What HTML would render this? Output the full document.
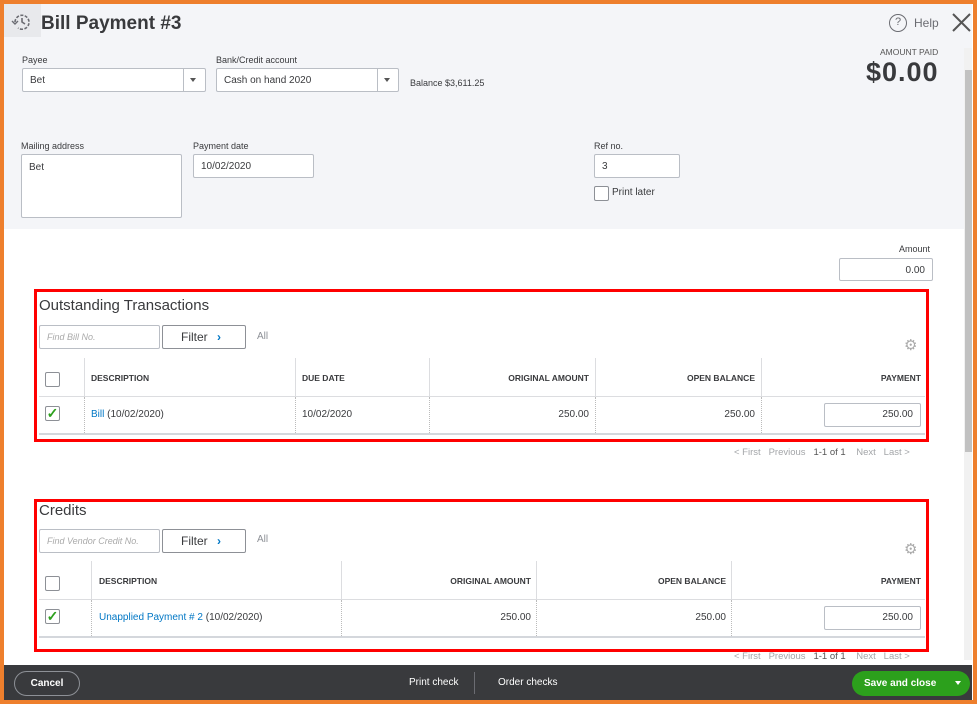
<!DOCTYPE html>
<html><head><meta charset="utf-8"><style>
*{box-sizing:border-box;margin:0;padding:0}
body{width:978px;height:706px;position:relative;overflow:hidden;background:#fff;font-family:"Liberation Sans",sans-serif;color:#393a3d}
.a{position:absolute}
.frame{left:0;top:0;width:977px;height:704px;border:4px solid #ee7f2d;border-top-width:4px}
.lbl{font-size:9px;color:#393a3d}
.inp{background:#fff;border:1px solid #babec5;border-radius:2px;font-size:10px;color:#393a3d;padding-left:7px}
.red{border:3px solid #f00}
.th{font-size:8.5px;font-weight:bold;color:#393a3d}
.td{font-size:10px;color:#393a3d}
.link{color:#0077c5}
.vl{width:1px;background:#dcdde0}
.vd{width:0;border-left:1px dotted #bbb}
.cb{width:15px;height:15px;border:1px solid #8d9096;border-radius:2px;background:#fff}
.pg{font-size:9.5px;color:#a3a5a8}
</style></head><body>
<div class="a" style="left:4px;top:4px;width:968px;height:225px;background:#f4f5f8"></div>
<div class="a" style="left:4px;top:229px;width:960px;height:436px;background:#fff"></div>
<div class="a" style="left:4px;top:4px;width:37px;height:33px;background:#e8e9ec"></div>
<svg class="a" style="left:11px;top:12px" width="22" height="20" viewBox="0 0 22 20"><path d="M4 10a7 7 0 1 1 3 6" fill="none" stroke="#6b6c72" stroke-width="1.6" stroke-dasharray="3 1.5"/><path d="M11 6v4l3 2" fill="none" stroke="#6b6c72" stroke-width="1.6"/><path d="M1 9l3 3 3-3" fill="none" stroke="#6b6c72" stroke-width="1.4"/></svg>
<div class="a" style="left:41px;top:13px;font-size:19px;font-weight:bold;color:#393a3d">Bill Payment #3</div>
<div class="a" style="left:889px;top:14px;width:18px;height:18px;border:1.5px solid #6b6c72;border-radius:50%;font-size:11px;text-align:center;line-height:15px;color:#6b6c72">?</div>
<div class="a" style="left:914px;top:16px;font-size:12px;color:#6b6c72">Help</div>
<svg class="a" style="left:951px;top:12px" width="21" height="21"><path d="M2 2L19 19M19 2L2 19" stroke="#555" stroke-width="2"/></svg>
<div class="a" style="left:880px;top:47px;font-size:8.5px;color:#555">AMOUNT PAID</div>
<div class="a" style="left:866px;top:57px;font-size:27px;font-weight:bold;color:#393a3d;letter-spacing:1px">$0.00</div>

<div class="a lbl" style="left:22px;top:55px">Payee</div>
<div class="a inp" style="left:22px;top:68px;width:184px;height:24px;line-height:24px">Bet</div>
<div class="a" style="left:183px;top:69px;width:1px;height:22px;background:#babec5"></div>
<div class="a" style="left:190px;top:78px;border:3.5px solid transparent;border-top:4px solid #555"></div>
<div class="a lbl" style="left:216px;top:55px">Bank/Credit account</div>
<div class="a inp" style="left:216px;top:68px;width:183px;height:24px;line-height:24px">Cash on hand 2020</div>
<div class="a" style="left:377px;top:69px;width:1px;height:22px;background:#babec5"></div>
<div class="a" style="left:384px;top:78px;border:3.5px solid transparent;border-top:4px solid #555"></div>
<div class="a" style="left:410px;top:78px;font-size:9px;color:#393a3d">Balance $3,611.25</div>

<div class="a lbl" style="left:21px;top:141px">Mailing address</div>
<div class="a inp" style="left:21px;top:154px;width:161px;height:64px;padding-top:7px">Bet</div>
<div class="a lbl" style="left:193px;top:141px">Payment date</div>
<div class="a inp" style="left:193px;top:154px;width:121px;height:24px;line-height:24px">10/02/2020</div>
<div class="a lbl" style="left:594px;top:141px">Ref no.</div>
<div class="a inp" style="left:594px;top:154px;width:86px;height:24px;line-height:24px">3</div>
<div class="a cb" style="left:594px;top:186px"></div>
<div class="a" style="left:612px;top:187px;font-size:10px">Print later</div>

<div class="a lbl" style="left:899px;top:244px">Amount</div>
<div class="a inp" style="left:839px;top:258px;width:94px;height:23px;line-height:23px;text-align:right;padding-right:7px">0.00</div>

<!-- Outstanding -->
<div class="a red" style="left:34px;top:289px;width:895px;height:153px"></div>
<div class="a" style="left:39px;top:297px;font-size:15px;color:#393a3d">Outstanding Transactions</div>
<div class="a inp" style="left:39px;top:325px;width:121px;height:24px;line-height:22px;font-size:9px;font-style:italic;color:#aaa">Find Bill No.</div>
<div class="a" style="left:162px;top:325px;width:84px;height:24px;border:1px solid #8d9096;border-radius:2px;font-size:12px;line-height:22px;padding-left:18px;color:#393a3d">Filter <span style="color:#0077c5;font-weight:bold;margin-left:6px">›</span></div>
<div class="a" style="left:257px;top:331px;font-size:10px;color:#8d9096">All</div>
<div class="a" style="left:904px;top:336px;font-size:15px;color:#aaa">⚙</div>
<div class="a vl" style="left:84px;top:358px;height:38px"></div>
<div class="a vl" style="left:295px;top:358px;height:38px"></div>
<div class="a vl" style="left:429px;top:358px;height:38px"></div>
<div class="a vl" style="left:595px;top:358px;height:38px"></div>
<div class="a vl" style="left:761px;top:358px;height:38px"></div>
<div class="a" style="left:39px;top:396px;width:886px;height:1px;background:#dcdde0"></div>
<div class="a vd" style="left:84px;top:397px;height:36px"></div>
<div class="a vd" style="left:295px;top:397px;height:36px"></div>
<div class="a vd" style="left:429px;top:397px;height:36px"></div>
<div class="a vd" style="left:595px;top:397px;height:36px"></div>
<div class="a vd" style="left:761px;top:397px;height:36px"></div>
<div class="a" style="left:39px;top:433px;width:886px;height:2px;background:#d4d7dc"></div>
<div class="a cb" style="left:45px;top:372px"></div>
<div class="a th" style="left:91px;top:373px">DESCRIPTION</div>
<div class="a th" style="left:302px;top:373px">DUE DATE</div>
<div class="a th" style="left:430px;top:373px;width:159px;text-align:right">ORIGINAL AMOUNT</div>
<div class="a th" style="left:596px;top:373px;width:159px;text-align:right">OPEN BALANCE</div>
<div class="a th" style="left:762px;top:373px;width:159px;text-align:right">PAYMENT</div>
<div class="a cb" style="left:45px;top:406px;color:#2ca01c;font-size:14px;line-height:12px;text-align:center;font-weight:bold">✓</div>
<div class="a td" style="left:91px;top:409px"><span class="link">Bill</span> (10/02/2020)</div>
<div class="a td" style="left:302px;top:409px">10/02/2020</div>
<div class="a td" style="left:430px;top:409px;width:159px;text-align:right">250.00</div>
<div class="a td" style="left:596px;top:409px;width:159px;text-align:right">250.00</div>
<div class="a inp" style="left:824px;top:403px;width:97px;height:24px;line-height:22px;text-align:right;padding-right:7px">250.00</div>
<div class="a pg" style="left:734px;top:447px">&lt; First&nbsp;&nbsp;&nbsp;Previous&nbsp;&nbsp;&nbsp;<span style="color:#555">1-1 of 1</span>&nbsp;&nbsp;&nbsp;&nbsp;Next&nbsp;&nbsp;&nbsp;Last &gt;</div>

<!-- Credits -->
<div class="a red" style="left:34px;top:499px;width:895px;height:153px"></div>
<div class="a" style="left:39px;top:502px;font-size:15px;color:#393a3d">Credits</div>
<div class="a inp" style="left:39px;top:529px;width:121px;height:24px;line-height:22px;font-size:9px;font-style:italic;color:#aaa">Find Vendor Credit No.</div>
<div class="a" style="left:162px;top:529px;width:84px;height:24px;border:1px solid #8d9096;border-radius:2px;font-size:12px;line-height:22px;padding-left:18px;color:#393a3d">Filter <span style="color:#0077c5;font-weight:bold;margin-left:6px">›</span></div>
<div class="a" style="left:257px;top:534px;font-size:10px;color:#8d9096">All</div>
<div class="a" style="left:904px;top:540px;font-size:15px;color:#aaa">⚙</div>
<div class="a vl" style="left:91px;top:561px;height:38px"></div>
<div class="a vl" style="left:341px;top:561px;height:38px"></div>
<div class="a vl" style="left:536px;top:561px;height:38px"></div>
<div class="a vl" style="left:731px;top:561px;height:38px"></div>
<div class="a" style="left:39px;top:599px;width:886px;height:1px;background:#dcdde0"></div>
<div class="a vd" style="left:91px;top:600px;height:36px"></div>
<div class="a vd" style="left:341px;top:600px;height:36px"></div>
<div class="a vd" style="left:536px;top:600px;height:36px"></div>
<div class="a vd" style="left:731px;top:600px;height:36px"></div>
<div class="a" style="left:39px;top:636px;width:886px;height:2px;background:#d4d7dc"></div>
<div class="a cb" style="left:45px;top:576px"></div>
<div class="a th" style="left:99px;top:576px">DESCRIPTION</div>
<div class="a th" style="left:342px;top:576px;width:189px;text-align:right">ORIGINAL AMOUNT</div>
<div class="a th" style="left:537px;top:576px;width:189px;text-align:right">OPEN BALANCE</div>
<div class="a th" style="left:732px;top:576px;width:189px;text-align:right">PAYMENT</div>
<div class="a cb" style="left:45px;top:609px;color:#2ca01c;font-size:14px;line-height:12px;text-align:center;font-weight:bold">✓</div>
<div class="a td" style="left:99px;top:612px"><span class="link">Unapplied Payment # 2</span> (10/02/2020)</div>
<div class="a td" style="left:342px;top:612px;width:189px;text-align:right">250.00</div>
<div class="a td" style="left:537px;top:612px;width:189px;text-align:right">250.00</div>
<div class="a inp" style="left:824px;top:606px;width:97px;height:24px;line-height:22px;text-align:right;padding-right:7px">250.00</div>
<div class="a pg" style="left:734px;top:651px">&lt; First&nbsp;&nbsp;&nbsp;Previous&nbsp;&nbsp;&nbsp;<span style="color:#555">1-1 of 1</span>&nbsp;&nbsp;&nbsp;&nbsp;Next&nbsp;&nbsp;&nbsp;Last &gt;</div>

<!-- scrollbar -->
<div class="a" style="left:964px;top:48px;width:8px;height:612px;background:#f1f1f1"></div>
<div class="a" style="left:965px;top:70px;width:7px;height:382px;background:#c1c1c1"></div>

<!-- footer -->
<div class="a" style="left:4px;top:665px;width:968px;height:35px;background:#393a3d"></div>
<div class="a" style="left:14px;top:671px;width:66px;height:25px;border:1px solid #8d9096;border-radius:13px;color:#fff;font-size:10px;font-weight:bold;text-align:center;line-height:23px">Cancel</div>
<div class="a" style="left:409px;top:677px;color:#fff;font-size:10px">Print check</div>
<div class="a" style="left:474px;top:672px;width:1px;height:22px;background:#6b6c72"></div>
<div class="a" style="left:498px;top:677px;color:#fff;font-size:10px">Order checks</div>
<div class="a" style="left:852px;top:671px;width:118px;height:25px;border-radius:13px;background:#2ca01c;color:#fff;font-size:10px;font-weight:bold;line-height:25px;padding-left:12px">Save and close</div>
<div class="a" style="left:955px;top:681px;border:3.5px solid transparent;border-top:4px solid #fff"></div>
<div class="a frame"></div>
</body></html>
